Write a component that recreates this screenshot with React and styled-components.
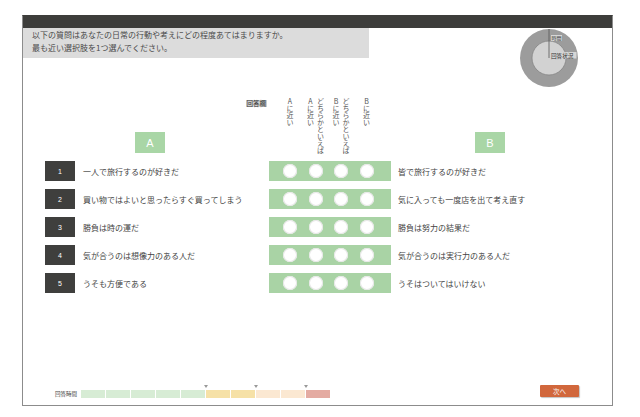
import React from 'react';
import styled, { createGlobalStyle } from 'styled-components';

const GlobalStyle = createGlobalStyle`
  body {
    margin: 0;
    background: #fff;
    font-family: "Noto Sans CJK JP", "Noto Sans", sans-serif;
    color: #444;
  }
`;

// + data
const questions = [
  { a: '一人で旅行するのが好きだ', b: '皆で旅行するのが好きだ' },
  { a: '買い物ではよいと思ったらすぐ買ってしまう', b: '気に入っても一度店を出て考え直す' },
  { a: '勝負は時の運だ', b: '勝負は努力の結果だ' },
  { a: '気が合うのは想像力のある人だ', b: '気が合うのは実行力のある人だ' },
  { a: 'うそも方便である', b: 'うそはついてはいけない' },
];

const choices = [
  ['Aに近い'],
  ['どちらかといえば', 'Aに近い'],
  ['どちらかといえば', 'Bに近い'],
  ['Bに近い'],
];

const segments = [
  { c: '#d7ecd5' }, { c: '#d7ecd5' }, { c: '#d7ecd5' }, { c: '#d7ecd5' }, { c: '#d7ecd5' },
  { c: '#f6e1a7', mark: true }, { c: '#f6e1a7' },
  { c: '#fbe8d2', mark: true }, { c: '#fbe8d2' },
  { c: '#e4aba2', mark: true },
];
// - data

// + styles
const Frame = styled.div`
  margin: 15px 0 0 22px;
  width: 591px;
  height: 391px;
  box-sizing: border-box;
  border: 1px solid #8c8c8c;
  border-top-color: #3d3d3b;
  display: flex;
  flex-direction: column;
`;

const TopBar = styled.div`
  height: 12px;
  background: #3d3d3b;
`;

const HeaderRow = styled.div`
  display: flex;
  justify-content: space-between;
  align-items: flex-start;
`;

const Instruction = styled.div`
  width: 346px;
  height: 30px;
  box-sizing: border-box;
  padding: 0 9px;
  background: #dcdcdc;
  font-size: 8px;
  line-height: 13px;
  color: #4a4a4a;
`;

const Donut = styled.svg`
  width: 60px;
  height: 60px;
  margin: 0 33px 0 0;
  display: block;
`;

const Board = styled.div`
  margin-top: 8px;
  padding-left: 22px;
  display: grid;
  grid-template-columns: 30px 194px 122px 1fr;
  grid-template-rows: 57px;
  grid-auto-rows: 20px;
  row-gap: 8px;
`;

const HeadLeft = styled.div`
  grid-column: 1 / 3;
  display: flex;
  flex-direction: column;
  justify-content: space-between;
  align-items: flex-start;
`;

const AnswerTag = styled.span`
  align-self: flex-end;
  margin: 4px 2px 0 0;
  padding: 0 1px;
  background: #cfcfcf;
  font-size: 6.5px;
  line-height: 7px;
  color: #333;
`;

const SideBadge = styled.div`
  width: 30px;
  height: 21px;
  margin-left: ${(p) => p.offset}px;
  background: #a9d6a6;
  color: #fff;
  font-family: "Liberation Sans", Arial, sans-serif;
  font-size: 11px;
  display: flex;
  align-items: center;
  justify-content: center;
`;

const HeadRight = styled.div`
  display: flex;
  align-items: flex-end;
`;

const ChoiceHead = styled.div`
  display: flex;
  padding: 2px 0 0 14px;
  gap: 11.5px;
  align-items: flex-start;
`;

const ChoiceLabel = styled.div`
  width: 14px;
  display: flex;
  justify-content: center;
`;

const VText = styled.div`
  writing-mode: vertical-rl;
  text-orientation: upright;
  font-size: 7px;
  line-height: 10px;
  color: #555;
  white-space: nowrap;
`;

const NumBox = styled.div`
  background: #3f3f3d;
  color: #fff;
  font-family: "Liberation Sans", Arial, sans-serif;
  font-size: 7px;
  display: flex;
  align-items: center;
  justify-content: center;
`;

const Statement = styled.div`
  display: flex;
  align-items: center;
  padding-left: ${(p) => p.pad}px;
  font-size: 8px;
  color: #444;
  white-space: nowrap;
`;

const ChoiceBar = styled.div`
  background: #a9d3a5;
  display: flex;
  align-items: center;
  padding-left: 14px;
  gap: 11.5px;
`;

const Radio = styled.span`
  width: 14px;
  height: 14px;
  border-radius: 50%;
  background: #fff;
  box-shadow: inset 0 0 0 1px #e6e6e6;
`;

const Footer = styled.div`
  margin-top: auto;
  padding: 0 33px 7px 32px;
  display: flex;
  justify-content: space-between;
  align-items: flex-end;
`;

const TimeGroup = styled.div`
  display: flex;
  align-items: flex-end;
  gap: 4px;
`;

const TimeLabel = styled.span`
  font-size: 5.5px;
  line-height: 8px;
  color: #444;
`;

const Segments = styled.div`
  display: flex;
  gap: 1px;
`;

const Segment = styled.div`
  width: 24px;
  display: flex;
  flex-direction: column;
`;

const Tick = styled.span`
  width: 0;
  height: 0;
  margin: 0 0 2px -2px;
  border-left: 2px solid transparent;
  border-right: 2px solid transparent;
  border-top: 3px solid ${(p) => (p.on ? '#999' : 'transparent')};
`;

const SegBar = styled.div`
  height: 8px;
  background: ${(p) => p.color};
`;

const NextButton = styled.button`
  width: 39px;
  height: 12px;
  padding: 0;
  border: none;
  border-radius: 1px;
  background: #d1673c;
  color: #fff;
  font-family: "Noto Sans CJK JP", sans-serif;
  font-size: 6.5px;
  line-height: 12px;
  box-shadow: 1px 1px 1px #c4c4c4;
  margin-bottom: 1px;
`;
// - styles

const ProgressDonut = () => (
  <Donut viewBox="0 0 60 60">
    <circle cx="30" cy="30" r="29" fill="#9c9c9c" />
    <circle cx="30" cy="30" r="17" fill="#d2d2d2" stroke="#858585" strokeWidth="0.8" />
    <line x1="30" y1="1" x2="30" y2="30" stroke="#555" strokeWidth="0.8" />
    <rect x="32" y="7" width="11" height="6" fill="#d6d6d6" />
    <text x="32.5" y="12" fontSize="5" fill="#333">時間</text>
    <rect x="31.5" y="24" width="26" height="6.5" fill="#d6d6d6" />
    <text x="32" y="29.5" fontSize="5.6" fill="#333">回答状況</text>
  </Donut>
);

export default function App() {
  return (
    <>
      <GlobalStyle />
      <Frame>
        <TopBar />
        <HeaderRow>
          <Instruction>
            以下の質問はあなたの日常の行動や考えにどの程度あてはまりますか。
            <br />
            最も近い選択肢を1つ選んでください。
          </Instruction>
          <ProgressDonut />
        </HeaderRow>

        <Board>
          <HeadLeft>
            <AnswerTag>回答欄</AnswerTag>
            <SideBadge offset={90}>A</SideBadge>
          </HeadLeft>
          <ChoiceHead>
            {choices.map((lines, i) => (
              <ChoiceLabel key={i}>
                <VText>
                  {lines.map((l, j) => (
                    <React.Fragment key={j}>
                      {j > 0 && <br />}
                      {l}
                    </React.Fragment>
                  ))}
                </VText>
              </ChoiceLabel>
            ))}
          </ChoiceHead>
          <HeadRight>
            <SideBadge offset={84}>B</SideBadge>
          </HeadRight>

          {questions.map((q, i) => (
            <React.Fragment key={i}>
              <NumBox>{i + 1}</NumBox>
              <Statement pad={8}>{q.a}</Statement>
              <ChoiceBar>
                <Radio />
                <Radio />
                <Radio />
                <Radio />
              </ChoiceBar>
              <Statement pad={7}>{q.b}</Statement>
            </React.Fragment>
          ))}
        </Board>

        <Footer>
          <TimeGroup>
            <TimeLabel>回答時間</TimeLabel>
            <Segments>
              {segments.map((s, i) => (
                <Segment key={i}>
                  <Tick on={s.mark} />
                  <SegBar color={s.c} />
                </Segment>
              ))}
            </Segments>
          </TimeGroup>
          <NextButton>次へ</NextButton>
        </Footer>
      </Frame>
    </>
  );
}
